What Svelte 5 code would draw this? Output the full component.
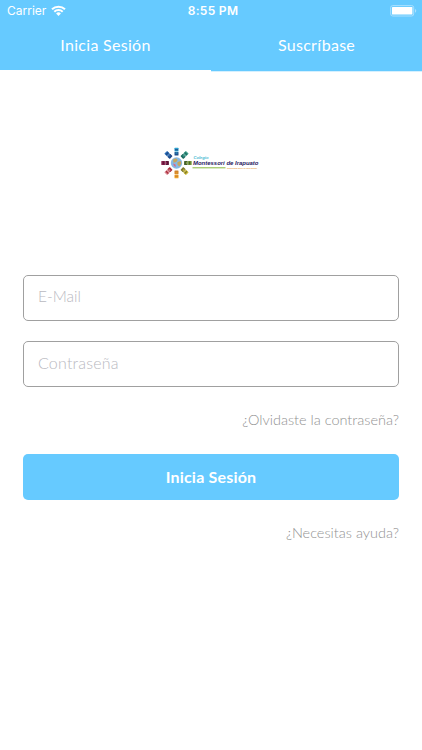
<script>
	let email = "";
	let password = "";
	let currTab = 0;

	const tabs = ["Inicia Sesión", "Suscríbase"];
	// pairs of desks around the globe, clockwise from the top
	const desks = [
		{ angle: 0, color: "#2fa3d0", dark: "#1c4f8c" },
		{ angle: 45, color: "#3f9f8b", dark: "#1d6b63" },
		{ angle: 90, color: "#7c9c3c", dark: "#46612a" },
		{ angle: 135, color: "#cdbb3a", dark: "#7d7a2c" },
		{ angle: 180, color: "#efa32b", dark: "#d0822a" },
		{ angle: 225, color: "#d98a94", dark: "#a82a38" },
		{ angle: 270, color: "#8c2450", dark: "#5c1437" },
		{ angle: 315, color: "#2d6fb8", dark: "#1b4787" }
	];
</script>

<header>
	<div class="status">
		<div class="carrier">
			<span>Carrier</span>
			<svg width="15" height="11" viewBox="0 0 15 11">
				<path d="M1 4.300a9.300 9.300 0 0 1 13 0" />
				<path d="M3.300 6.700a6 6 0 0 1 8.400 0" />
				<path class="dot" d="M5.100 8.500a3.400 3.400 0 0 1 4.800 0L7.500 10.900z" />
			</svg>
		</div>
		<div class="time">8:55 PM</div>
		<svg class="battery" width="27" height="12" viewBox="0 0 27 12">
			<rect class="shell" x="0.700" y="0.600" width="23" height="10.400" rx="2" />
			<rect x="2" y="2" width="20.400" height="7.600" rx="0.600" />
			<path class="cap" d="M25 4c1.700.7 1.700 3 0 3.700z" />
		</svg>
	</div>
	<nav>
		{#each tabs as tab, i}
			<button class="tab" class:active={i == currTab} on:click={() => (currTab = i)}>{tab}</button>
		{/each}
	</nav>
</header>

<main>
	<svg class="logo" width="102" height="34" viewBox="0 0 102 34">
		{#each desks as desk}
			<g transform="rotate({desk.angle} 16.500 17)">
				<rect x="14.500" y="1.800" width="4" height="3.800" rx="0.500" fill={desk.color} />
				<rect x="14.900" y="3.200" width="3.200" height="1.200" fill={desk.dark} />
				<rect x="14.500" y="5.900" width="4" height="3.500" rx="0.500" fill={desk.dark} />
				<rect x="15.500" y="6.500" width="2" height="1" fill={desk.color} />
			</g>
		{/each}
		<circle cx="16.500" cy="17" r="5.700" fill="#86b9e6" />
		<path d="M13 13.500l3-1.200 1.800 1.600-1.600 2.200-2.700.7zM17.500 16l3.300-1 .6 2.500-2.200 3-1.800-2z" fill="#c6a65c" />
		<path d="M13 17.500l2.300.8.7 2.500-1.800-.5z" fill="#d66a8c" />
		<text class="small" x="33.500" y="12.600" textLength="15" lengthAdjust="spacingAndGlyphs">Colegio</text>
		<text class="name" x="33" y="19" textLength="65.500" lengthAdjust="spacingAndGlyphs">Montessori de Irapuato</text>
		<rect x="32.500" y="21.100" width="33" height="1.300" fill="#a4c96a" />
		<text class="motto" x="67" y="22.600" textLength="30" lengthAdjust="spacingAndGlyphs">Educando para la vida desde</text>
	</svg>

	<form on:submit|preventDefault>
		<input type="email" placeholder="E-Mail" bind:value={email} />
		<input class="password" type="password" placeholder="Contraseña" bind:value={password} />
		<a href="#forgot">¿Olvidaste la contraseña?</a>
		<button class="submit">Inicia Sesión</button>
		<a href="#help">¿Necesitas ayuda?</a>
	</form>
</main>

<style>
	:global(body) {
		background: #fff;
		font-family: Lato, sans-serif;
	}

	header {
		height: 72px;
		background: #66caff;
		color: #fff;
		border-bottom: 1px solid #d4f0ff;
		box-sizing: border-box;
	}

	.status {
		display: grid;
		grid-template-columns: 1fr auto 1fr;
		align-items: center;
		height: 21px;
		padding: 0 5px 0 7px;
		font-family: Inter, sans-serif;
		font-size: 12px;
	}

	.carrier {
		display: flex;
		align-items: center;
		gap: 5px;
		font-size: 12px;
	}

	.carrier path {
		fill: none;
		stroke: #fff;
		stroke-width: 2;
	}

	.carrier .dot {
		fill: #fff;
		stroke: none;
	}

	.time {
		font-weight: 600;
		letter-spacing: 0.3px;
		padding-left: 2px;
	}

	.battery {
		justify-self: end;
		fill: #fff;
	}

	.battery .shell {
		fill: none;
		stroke: #a9e0ff;
		stroke-width: 1;
	}

	.battery .cap {
		fill: #a9e0ff;
	}

	nav {
		display: flex;
		height: 51px;
	}

	button {
		border: 0;
		margin: 0;
		padding: 0;
		font-family: inherit;
		color: #fff;
	}

	.tab {
		flex: 1;
		height: 51px;
		padding-bottom: 2px;
		border-bottom: 2px solid transparent;
		background: none;
		font-size: 16px;
		letter-spacing: 0.3px;
	}

	.tab.active {
		border-color: #fff;
	}

	main {
		padding: 74px 23px 0;
	}

	.logo {
		display: block;
		margin: 0 auto;
	}

	.logo text {
		font-family: "Liberation Sans", sans-serif;
		font-style: italic;
		font-weight: 700;
	}

	.logo .small {
		font-size: 4px;
		fill: #43b8d1;
	}

	.logo .name {
		font-size: 6px;
		fill: #28205f;
	}

	.logo .motto {
		font-size: 2.3px;
		fill: #e9a85b;
	}

	form {
		display: flex;
		flex-direction: column;
		padding-top: 95px;
	}

	input {
		box-sizing: border-box;
		height: 46px;
		margin: 0 0 20px;
		padding: 0 14px 4px;
		border: 1px solid #a0a0a0;
		border-radius: 5px;
		background: #fff;
		font-family: inherit;
		font-size: 15.5px;
		font-weight: 300;
		outline: none;
	}

	.password {
		font-size: 16px;
		letter-spacing: 0.2px;
	}

	input::placeholder {
		color: #b9b9bf;
		opacity: 1;
	}

	a {
		align-self: flex-end;
		margin-top: 3px;
		color: #929292;
		font-size: 14.5px;
		font-weight: 300;
		line-height: 20px;
		text-decoration: none;
	}

	.submit {
		height: 46px;
		margin: 24px 0 20px;
		padding-bottom: 1px;
		border-radius: 5px;
		background: #66caff;
		font-size: 16px;
		font-weight: 700;
		letter-spacing: 0.2px;
	}
</style>
